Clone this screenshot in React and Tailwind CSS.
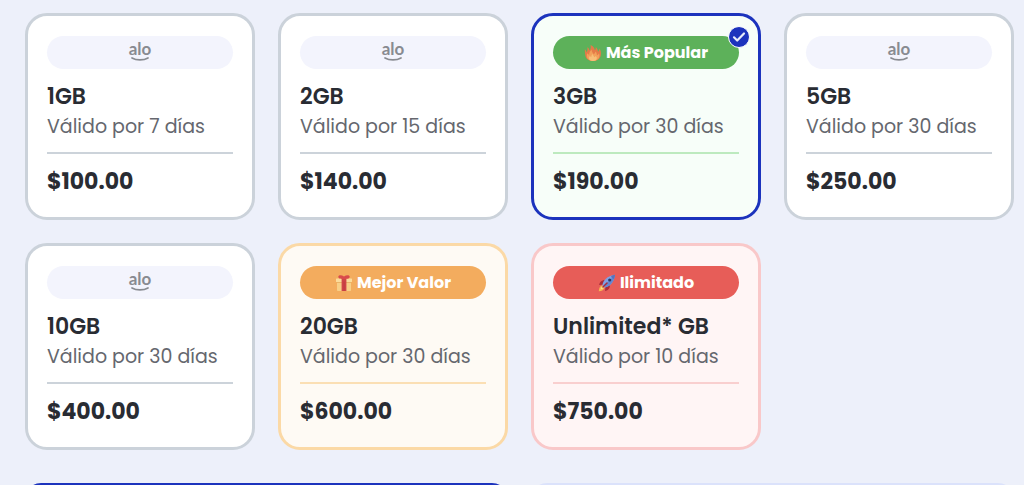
import { useState } from "react";

const themes = {
  plain: { border: "border-[#cbd2da]", fill: "bg-white", pill: "bg-[#f3f4fd]", line: "border-[#ccd3da]" },
  green: { border: "border-[#bce8bd]", fill: "bg-[#f7fef9]", pill: "bg-[#5db15a]", line: "border-[#bdeabf]" },
  orange: { border: "border-[#fbd9a6]", fill: "bg-[#fefaf4]", pill: "bg-[#f3ac5e]", line: "border-[#fbdfb4]" },
  red: { border: "border-[#f9c8c9]", fill: "bg-[#fff5f5]", pill: "bg-[#e75d58]", line: "border-[#f9cfcf]" },
};

const plans = [
  { data: "1GB", days: 7, price: "$100.00", theme: "plain" },
  { data: "2GB", days: 15, price: "$140.00", theme: "plain" },
  { data: "3GB", days: 30, price: "$190.00", theme: "green", tag: "Más Popular", Icon: Flame },
  { data: "5GB", days: 30, price: "$250.00", theme: "plain" },
  { data: "10GB", days: 30, price: "$400.00", theme: "plain" },
  { data: "20GB", days: 30, price: "$600.00", theme: "orange", tag: "Mejor Valor", Icon: Gift },
  { data: "Unlimited* GB", days: 10, price: "$750.00", theme: "red", tag: "Ilimitado", Icon: Rocket },
];

function Flame() {
  return (
    <svg viewBox="0 0 18 18" className="size-[18px]" aria-hidden="true">
      <path d="M9 17C4.500 17 1.500 14.500 1.300 11 1 9.500.8 7 .9 5.200 1.800 6 2.300 7 2.600 8.200 3.300 7.300 3.600 6 3.400 3.300 4.500 4 5.200 5 5.500 6.500 6.800 5 7 3 6.500.9 9.500 2 10.500 4 10.900 6.300 11.600 5.500 11.900 4.500 11.700 3 13.200 4.200 13.800 5.800 14 7.800 14.900 7 15.400 6 15.500 4.600 16.800 6.500 17.200 8.500 16.900 10.500 16.600 14.500 13.500 17 9 17Z" fill="#e57a48" />
      <path d="M9 17C5.500 17 3 15 2.800 12.300 2.700 11 2.900 10 3.300 9.200 3.900 10 4.400 10.400 5.200 10.700 5.200 8.500 6.200 7.200 7.600 5.600 7.700 7.500 8.500 8.700 9.700 10.300 10.700 9.600 11.200 8.700 11.500 7.500 12.500 8.500 12.900 9.700 12.900 11.200 13.900 10.800 14.500 10.200 15 9.200 15.500 10.500 15.600 11.600 15.300 12.800 14.700 15.500 12.400 17 9 17Z" fill="#f2a05a" />
      <path d="M9 17C6.700 17 5.100 15.900 5 14.200 4.900 13.300 5.300 12.500 5.900 12 6.300 12.600 6.700 12.900 7.300 13 7.400 11.600 7.800 10.800 8.600 10 9 11.500 9.900 12.200 10.400 13.200 10.900 12.900 11.300 12.500 11.500 11.900 12.400 12.500 12.900 13.200 12.800 14.200 12.600 15.900 11.200 17 9 17Z" fill="#f8bf78" />
    </svg>
  );
}

function Gift() {
  return (
    <svg viewBox="0 0 18 18" className="size-[18px]" aria-hidden="true">
      <path d="M2 7h14v9.300c0 .4-.3.700-.7.700H2.700c-.4 0-.7-.3-.7-.7V7Z" fill="#f8cf87" />
      <rect x="1" y="4.500" width="16" height="3.500" rx=".6" fill="#fbdb9b" />
      <path d="M2 8h14v1H2Z" fill="#e9b469" />
      <path d="M6.600 4.500h4.800V17H6.600Z" fill="#cf4547" />
      <path d="M8.700 7.500h.7V17h-.7Z" fill="#b93840" />
      <path d="M9 5C6.500 5 3.500 4.800 3.300 3 3.100 1 6.500.7 9 2.600 11.500.7 14.900 1 14.700 3 14.500 4.800 11.500 5 9 5Z" fill="#d94b4c" />
    </svg>
  );
}

function Rocket() {
  return (
    <svg viewBox="0 0 18 18" className="size-[18px]" aria-hidden="true">
      <path d="M6 10.500 1.200 11c.2-2.500 2.300-5 5.800-5ZM7.500 12 7 16.900c2.500-.2 5-2.300 5-6Z" fill="#a92d3a" />
      <path d="M4.500 11.300C2 12 1 14 .8 17.200 4 17 6 16 6.700 13.500Z" fill="#f8b652" />
      <path d="M4.900 12.300c-1.600.7-2.100 1.700-2.300 3.100 1.500-.2 2.500-.8 3.100-2.300Z" fill="#fde18d" />
      <path d="M4.400 11.400C5 6.500 9 2 17 .8 16 8.500 11.500 12.800 6.600 13.600Z" fill="#7fa0e4" />
      <path d="M6.600 13.600C11.500 12.800 16 8.500 17 .8L9.200 8.700Z" fill="#6586d0" />
      <path d="M13.100 1.900c.3 1.700 1.200 2.600 2.900 3 .5-1.100.8-2.500 1-4.100-1.500.2-2.800.6-3.900 1.100Z" fill="#5873bb" />
      <circle cx="11.700" cy="6" r="1.600" fill="#273a66" />
      <path d="m5 13 4-4" stroke="#a92d3a" strokeWidth="1.600" strokeLinecap="round" />
    </svg>
  );
}

function AloMark() {
  return (
    <span className="flex flex-col items-center pb-1 text-[#888b91]">
      <span className="font-['Lato'] text-[17px] leading-4 font-bold">alo</span>
      <svg viewBox="0 0 18 4" className="h-1 w-[18px]" aria-hidden="true">
        <path d="M1 .9C5.500 3.600 12.500 3.600 17 .9" fill="none" stroke="currentColor" strokeWidth="1.700" strokeLinecap="round" />
      </svg>
    </span>
  );
}

function PlanCard({ plan, selected, onSelect }) {
  const theme = themes[plan.theme];
  const { Icon } = plan;
  return (
    <button
      type="button"
      aria-pressed={selected}
      onClick={onSelect}
      className={`relative flex flex-col rounded-[22px] border-3 px-[19px] pt-5 pb-[19px] text-left ${theme.fill} ${selected ? "border-[#1c33bd]" : theme.border}`}
    >
      <span className={`flex h-[33px] w-full items-center justify-center gap-1 rounded-full text-base font-bold text-white ${theme.pill}`}>
        {plan.tag ? (
          <>
            <Icon />
            <span>{plan.tag}</span>
          </>
        ) : (
          <AloMark />
        )}
      </span>
      <span className="mt-3 text-[22px] leading-8 font-semibold text-[#292c33]">{plan.data}</span>
      <span className="text-[19px] leading-7 text-[#65676e]">Válido por {plan.days} días</span>
      <span className={`mt-[11px] w-full border-t-2 pt-3 text-[22px] leading-8 font-bold text-[#292c33] ${theme.line}`}>{plan.price}</span>
      {selected && (
        <span className="absolute top-2.5 right-2 flex size-[22px] items-center justify-center rounded-full border border-white bg-[#1c33bd]">
          <svg viewBox="0 0 14 12" className="h-3 w-3.5" aria-hidden="true">
            <path d="m2 6.300 3.200 3.200L12 2.500" fill="none" stroke="#e8ecfa" strokeWidth="2.200" strokeLinecap="round" strokeLinejoin="round" />
          </svg>
        </span>
      )}
    </button>
  );
}

export default function App() {
  const [selected, setSelected] = useState("3GB");
  return (
    <main className="h-screen overflow-hidden bg-[#edf0fa] pt-[13px] pr-2.5 pl-[25px] font-['Poppins','Inter',sans-serif]">
      <div className="grid grid-cols-4 gap-[23px]">
        {plans.map((plan) => (
          <PlanCard key={plan.data} plan={plan} selected={selected === plan.data} onSelect={() => setSelected(plan.data)} />
        ))}
      </div>
      <div className="mt-[33px] grid grid-cols-2 gap-[23px]">
        <button type="button" aria-label="Comprar" className="h-14 rounded-2xl bg-[#1c33bd]" />
        <button type="button" aria-label="Detalles" className="h-14 rounded-2xl bg-[#dbe2fb]" />
      </div>
    </main>
  );
}
